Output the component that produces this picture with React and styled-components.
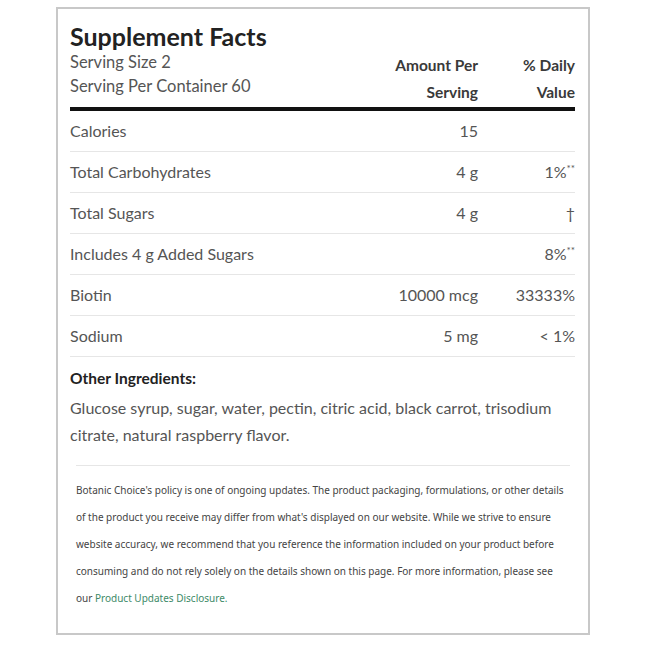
import React from "react"
import styled, { createGlobalStyle } from "styled-components"

const GlobalStyle = createGlobalStyle`
  html, body {
    margin: 0;
    padding: 0;
    background: #fff;
  }
  body {
    font-family: Lato, "Noto Sans", "Liberation Sans", sans-serif;
    color: #555;
  }
`

const Page = styled.div`
  padding: 7px 0 0 56px;
`

const Card = styled.section`
  box-sizing: border-box;
  width: 534px;
  height: 628px;
  border: 2px solid #c8c8c8;
  padding: 13px 13px 0 12px;
`

const Head = styled.div`
  display: grid;
  grid-template-columns: 1fr 130px 97px;
  align-items: end;
  border-bottom: 4px solid #111;
`

const Intro = styled.div`
  padding-bottom: 9px;
`

const Title = styled.h2`
  margin: 0;
  font-size: 25px;
  line-height: 28px;
  font-weight: 700;
  color: #222;
`

const Line = styled.div`
  font-size: 16.5px;
  line-height: 24px;
`

const ColHead = styled.div`
  text-align: right;
  font-size: 15.5px;
  font-weight: 700;
  line-height: 27px;
  color: #3a3a3a;
  padding-bottom: 1px;
`

const Row = styled.div`
  display: grid;
  grid-template-columns: 1fr 130px 97px;
  padding: 8px 0;
  font-size: 16px;
  line-height: 24px;
  border-bottom: 1px solid #e6e6e6;
`

const Cell = styled.span`
  text-align: ${({ right }) => (right ? "right" : "left")};
`

const Sup = styled.sup`
  font-size: 10px;
  line-height: 0;
  vertical-align: 6px;
`

const Other = styled.div`
  padding-top: 10px;
`

const OtherTitle = styled.h3`
  margin: 0;
  font-size: 15.5px;
  line-height: 22px;
  font-weight: 700;
  color: #222;
`

const OtherText = styled.p`
  margin: 5px 0 0;
  font-size: 16px;
  line-height: 27px;
`

const Disclaimer = styled.div`
  margin: 17px 5px 0 6px;
  border-top: 1px solid #e6e6e6;
  padding-top: 11px;
  font-family: "Noto Sans", "DejaVu Sans", sans-serif;
  font-size: 10px;
  line-height: 27px;
  color: #444;
  white-space: nowrap;
`

const DisclaimerLink = styled.a`
  color: #3d8a68;
  text-decoration: none;
`

const rows = [
  { name: "Calories", amount: "15", dv: "" },
  { name: "Total Carbohydrates", amount: "4 g", dv: "1%", mark: "**" },
  { name: "Total Sugars", amount: "4 g", dv: "†" },
  { name: "Includes 4 g Added Sugars", amount: "", dv: "8%", mark: "**" },
  { name: "Biotin", amount: "10000 mcg", dv: "33333%" },
  { name: "Sodium", amount: "5 mg", dv: "< 1%" },
]

const App = () => (
  <>
    <GlobalStyle />
    <Page>
      <Card>
        <Head>
          <Intro>
            <Title>Supplement Facts</Title>
            <Line>Serving Size 2</Line>
            <Line>Serving Per Container 60</Line>
          </Intro>
          <ColHead>
            Amount Per
            <br />
            Serving
          </ColHead>
          <ColHead>
            % Daily
            <br />
            Value
          </ColHead>
        </Head>

        {rows.map((r) => (
          <Row key={r.name}>
            <Cell>{r.name}</Cell>
            <Cell right>{r.amount}</Cell>
            <Cell right>
              {r.dv}
              {r.mark && <Sup>{r.mark}</Sup>}
            </Cell>
          </Row>
        ))}

        <Other>
          <OtherTitle>Other Ingredients:</OtherTitle>
          <OtherText>
            Glucose syrup, sugar, water, pectin, citric acid, black carrot, trisodium citrate, natural raspberry flavor.
          </OtherText>
        </Other>

        <Disclaimer>
          Botanic Choice's policy is one of ongoing updates. The product packaging, formulations, or other details
          <br />
          of the product you receive may differ from what's displayed on our website. While we strive to ensure
          <br />
          website accuracy, we recommend that you reference the information included on your product before
          <br />
          consuming and do not rely solely on the details shown on this page. For more information, please see
          <br />
          our <DisclaimerLink href="#">Product Updates Disclosure.</DisclaimerLink>
        </Disclaimer>
      </Card>
    </Page>
  </>
)

export default App
